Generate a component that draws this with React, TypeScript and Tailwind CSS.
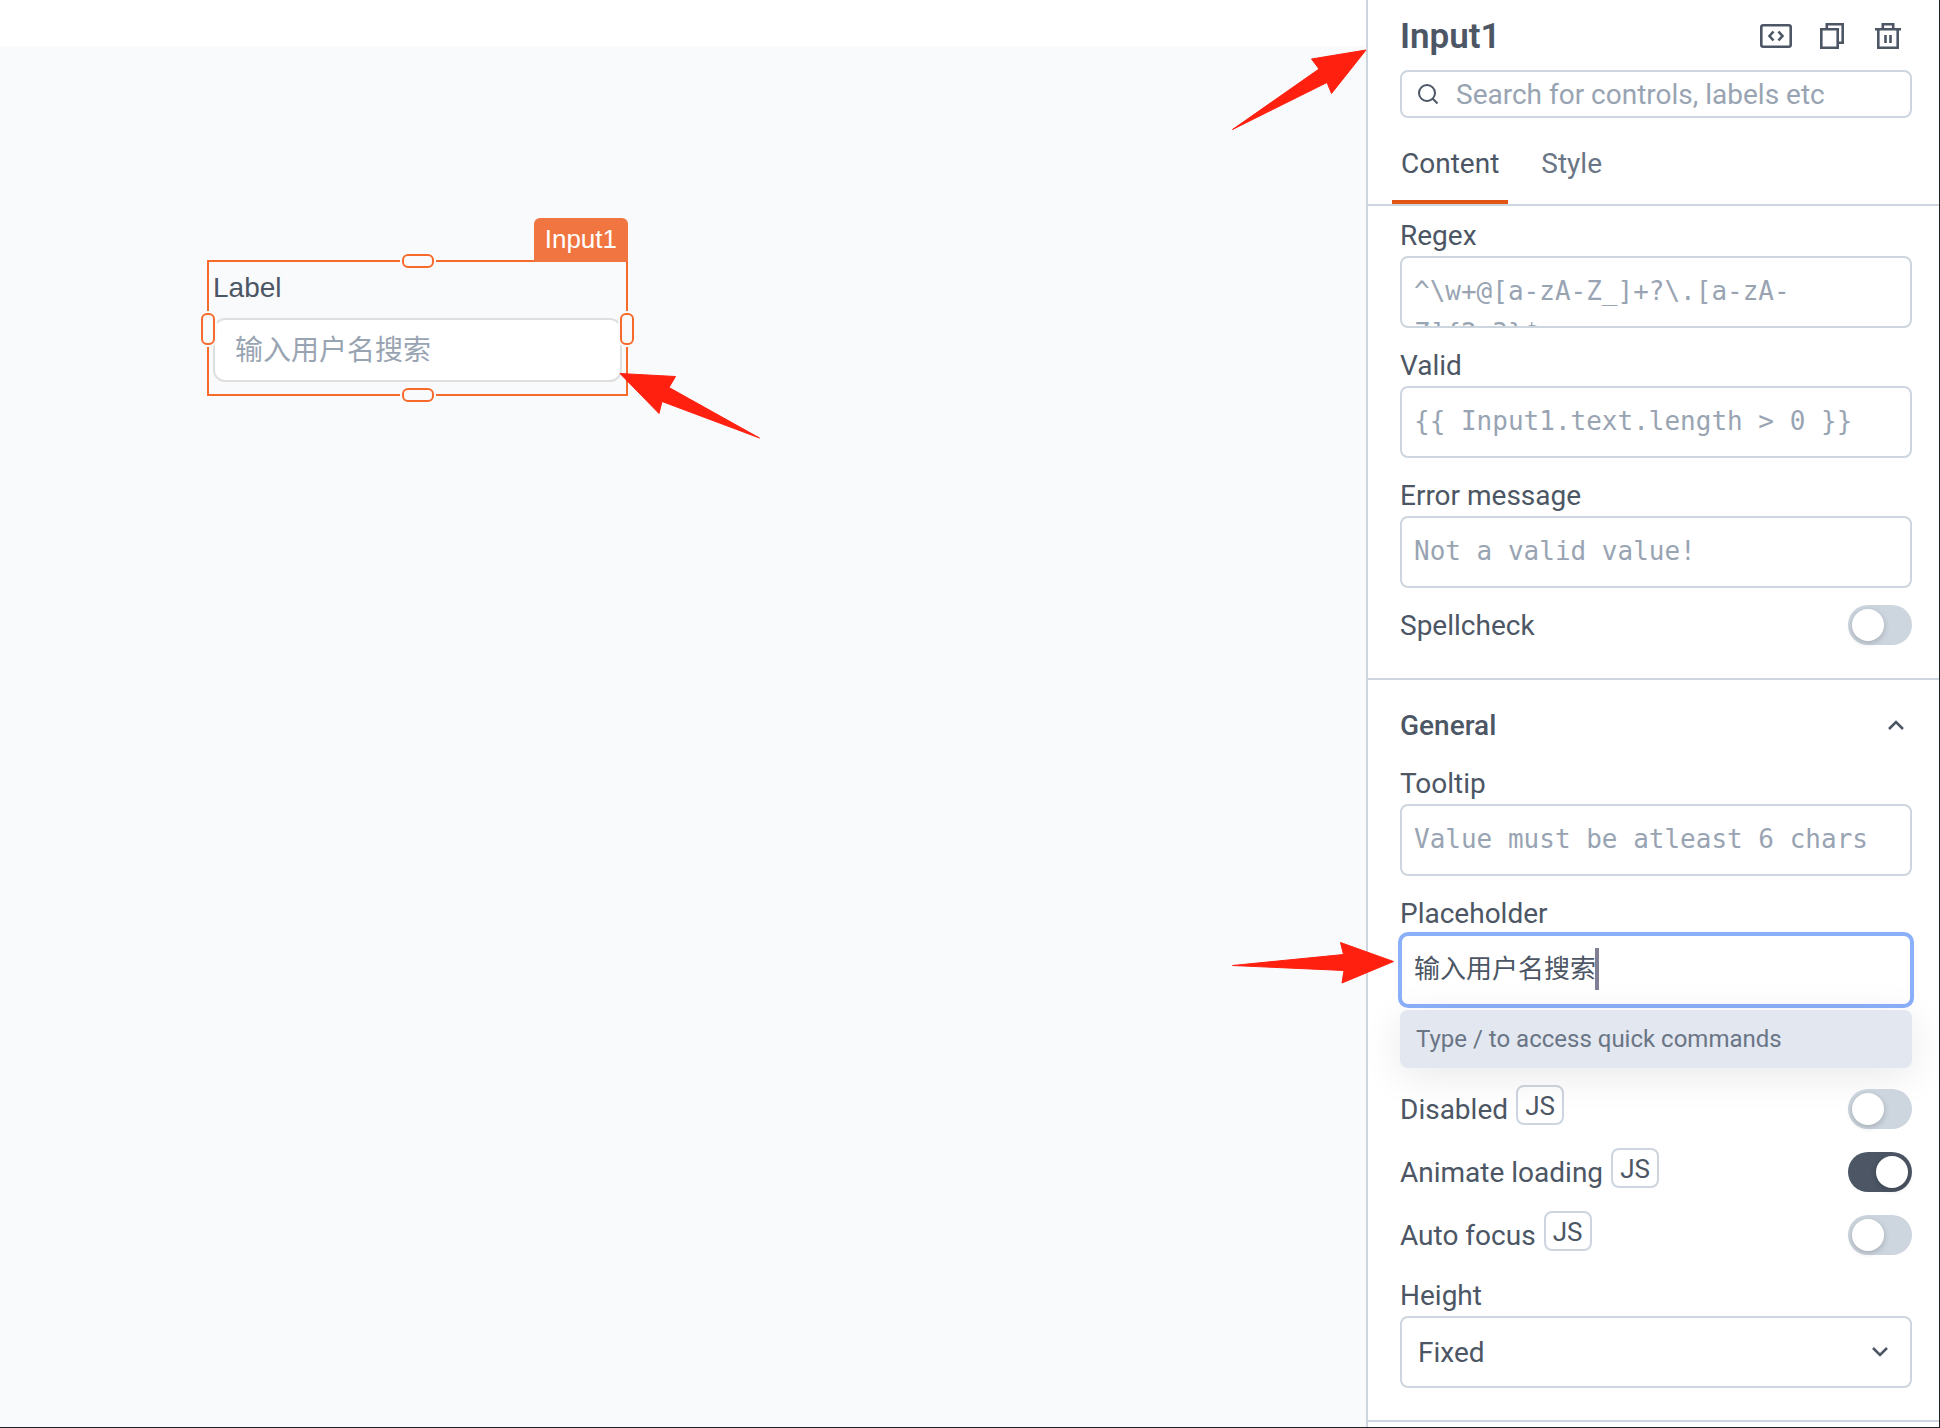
import { useState } from 'react';

const ARROW = '#ff2010';

type FieldProps = {
  id: string;
  label: string;
  placeholder: string;
};

function Field({ id, label, placeholder }: FieldProps) {
  const [value, setValue] = useState('');

  return (
    <div>
      <label htmlFor={id} className="block leading-10">{label}</label>
      <textarea
        id={id}
        value={value}
        onChange={(e) => setValue(e.target.value)}
        placeholder={placeholder}
        className="block h-18 w-full resize-none overflow-hidden rounded-lg border-2 border-[#cdd5df] bg-white px-3 pt-3 font-['DejaVu_Sans_Mono',monospace] text-[26px] leading-[42px] outline-none placeholder:text-[#99a4b3]"
      />
    </div>
  );
}

type ToggleProps = {
  id: string;
  label: string;
  initial?: boolean;
  js?: boolean;
};

function ToggleRow({ id, label, initial = false, js = false }: ToggleProps) {
  const [on, setOn] = useState(initial);

  return (
    <div className="flex h-10 items-center justify-between">
      <div className="flex items-center gap-2">
        <label htmlFor={id} className="pt-0.5 leading-10">{label}</label>
        {js && (
          <button
            type="button"
            aria-label={`${label} JS`}
            className="mb-2 h-10 w-12 rounded-lg border-2 border-[#cdd5df] bg-white pt-px text-center text-[26px] leading-9"
          >
            JS
          </button>
        )}
      </div>
      <span className="relative h-10 w-16">
        <input
          id={id}
          type="checkbox"
          role="switch"
          checked={on}
          onChange={(e) => setOn(e.target.checked)}
          className="peer block h-10 w-16 appearance-none rounded-full bg-[#cdd5df] checked:bg-[#4c5664]"
        />
        <span className="pointer-events-none absolute top-1 left-1 size-8 rounded-full bg-white shadow-[0_2px_6px_rgba(0,0,0,0.2)] peer-checked:left-7" />
      </span>
    </div>
  );
}

function Canvas() {
  const handle = 'absolute rounded-md border-2 border-[#f86a2b] bg-[#f8fafc] ring-2 ring-[#f8fafc]';

  return (
    <main className="flex min-w-0 flex-1 flex-col bg-[#f8fafc]">
      <div className="h-[46px] bg-white" />
      <div className="relative flex-1">
        <div className="absolute top-[214px] left-[207px] h-[136px] w-[421px] border-2 border-[#f86a2b] px-1 pt-[10px] font-['Liberation_Sans','Noto_Sans_CJK_SC',sans-serif]">
          <div className="absolute -right-0.5 bottom-full h-11 rounded-t-md bg-[#f07541] px-[11px] text-[26px] leading-[42px] text-white">
            Input1
          </div>
          <label htmlFor="widget-input" className="block text-[28px] leading-8 text-[#4c5664]">Label</label>
          <input
            id="widget-input"
            type="text"
            placeholder="输入用户名搜索"
            className="mt-[14px] block h-16 w-full rounded-xl border-2 border-[#e0dfdf] bg-white px-5 pt-0.5 text-[28px] outline-none placeholder:text-[#99a4b3]"
          />
          <span className={`${handle} inset-x-0 -top-2 mx-auto h-[14px] w-8`} />
          <span className={`${handle} inset-x-0 -bottom-2 mx-auto h-[14px] w-8`} />
          <span className={`${handle} top-[51px] -left-2 h-8 w-[14px]`} />
          <span className={`${handle} top-[51px] -right-2 h-8 w-[14px]`} />
          <svg className="absolute top-[110px] left-[410px]" width="143" height="68" fill={ARROW} stroke={ARROW} strokeLinejoin="round">
            <path d="M1 1.5 56.5 4.5 50 15.5 140.5 66 43 29.5 40 41.5Z" />
          </svg>
        </div>
      </div>
    </main>
  );
}

function PanelHeader() {
  return (
    <header className="border-b-2 border-[#cdd5df] px-8 pr-[27px]">
      <div className="flex h-[70px] items-center justify-between">
        <h1 className="pt-1 text-[35px] font-semibold">Input1</h1>
        <div className="flex gap-6 pt-0.5 pr-2">
          <button type="button" aria-label="Bind code">
            <svg width="32" height="32" fill="none" stroke="currentColor" strokeWidth="2.6">
              <rect x="1.3" y="5.3" width="29.4" height="21.4" rx="2" />
              <path d="M13.5 11.5 9.5 16l4 4.5M18.5 11.5l4 4.5-4 4.5" />
            </svg>
          </button>
          <button type="button" aria-label="Copy widget">
            <svg width="32" height="32" fill="none" stroke="currentColor" strokeWidth="2.6">
              <path d="M5.3 9.3h16.4v18.4H5.3zM10.8 9V4.3h15.9v18.4H22" />
            </svg>
          </button>
          <button type="button" aria-label="Delete widget">
            <svg width="32" height="32" fill="none" stroke="currentColor" strokeWidth="2.6">
              <path d="M3 9.3h26M10.8 9V4.3h10.4V9M6.3 9.3v18.4h19.4V9.3M13.5 15v8M18.5 15v8" />
            </svg>
          </button>
        </div>
      </div>
      <div className="flex h-12 items-center rounded-lg border-2 border-[#cdd5df] pl-4">
        <svg width="20" height="20" fill="none" stroke="currentColor" strokeWidth="2" aria-hidden="true">
          <circle cx="9" cy="9" r="8" />
          <path d="m14.5 14.5 5 5" />
        </svg>
        <input
          type="search"
          aria-label="Search"
          placeholder="Search for controls, labels etc"
          className="ml-[18px] min-w-0 flex-1 pt-0.5 outline-none placeholder:text-[#99a4b3]"
        />
      </div>
      <div role="tablist" className="-ml-2 flex gap-6 pt-3">
        <button type="button" role="tab" aria-selected="true" className="h-[74px] border-b-4 border-[#e15615] px-[9px] pb-0.5">
          Content
        </button>
        <button type="button" role="tab" aria-selected="false" className="h-[74px] border-b-4 border-transparent px-[9px] pb-0.5 text-[#6a7585]">
          Style
        </button>
      </div>
    </header>
  );
}

function PlaceholderField() {
  const [text, setText] = useState('输入用户名搜索');

  return (
    <div>
      <label htmlFor="placeholder" className="block leading-10">Placeholder</label>
      <div className="relative">
        <textarea
          id="placeholder"
          value={text}
          onChange={(e) => setText(e.target.value)}
          className="block h-18 w-full resize-none overflow-hidden rounded-lg border-2 border-[#8bb0fa] bg-white px-3 pt-3 font-['DejaVu_Sans_Mono','Noto_Sans_CJK_SC',monospace] text-[26px] leading-[42px] ring-2 ring-[#8bb0fa] outline-none"
        />
        <span className="absolute top-[14px] left-[195px] h-[42px] w-1 bg-[#7f8093]" />
        <div className="absolute inset-x-0 top-[76px] h-[58px] rounded-lg bg-[#e2e7f0] px-4 text-[24px] leading-[58px] text-[#6a7585] shadow-[0_8px_40px_rgba(0,0,0,0.09)]">
          Type / to access quick commands
        </div>
        <svg className="absolute top-[7px] left-[-169px]" width="165" height="43" fill={ARROW} stroke={ARROW} strokeLinejoin="round">
          <path d="M162.5 20.5 109.5 1.5 112.5 13.5 1.5 24.5 113 29.5 111 42Z" />
        </svg>
      </div>
    </div>
  );
}

export default function App() {
  return (
    <div className="flex min-h-screen border-r border-b border-[#1f2125] bg-white">
      <Canvas />
      <aside className="relative w-[573px] shrink-0 border-l-2 border-[#cdd5df] bg-white font-[Roboto,'Noto_Sans_CJK_SC',sans-serif] text-[28px] text-[#4c5664]">
        <PanelHeader />

        <section className="border-b-2 border-[#cdd5df] pt-[10px] pr-[27px] pb-[33px] pl-8">
          <div className="flex flex-col gap-[18px] pb-[17px]">
            <Field id="regex" label="Regex" placeholder={'^\\w+@[a-zA-Z_]+?\\.[a-zA-\nZ]{2,3}$'} />
            <Field id="valid" label="Valid" placeholder="{{ Input1.text.length > 0 }}" />
            <Field id="error-message" label="Error message" placeholder="Not a valid value!" />
          </div>
          <ToggleRow id="spellcheck" label="Spellcheck" />
        </section>

        <section className="border-b-2 border-[#cdd5df] pt-[25px] pr-[27px] pb-8 pl-8">
          <button type="button" aria-expanded="true" className="flex h-10 w-full items-center justify-between pr-2 font-medium">
            <span className="pt-0.5">General</span>
            <svg width="16" height="10" fill="none" stroke="currentColor" strokeWidth="2.6" aria-hidden="true">
              <path d="m1 9 7-7 7 7" />
            </svg>
          </button>
          <div className="flex flex-col gap-[18px] pt-[19px] pb-[83px]">
            <Field id="tooltip" label="Tooltip" placeholder="Value must be atleast 6 chars" />
            <PlaceholderField />
          </div>
          <div className="flex flex-col gap-[23px]">
            <ToggleRow id="disabled" label="Disabled" js />
            <ToggleRow id="animate-loading" label="Animate loading" initial js />
            <ToggleRow id="auto-focus" label="Auto focus" js />
          </div>
          <label htmlFor="height" className="mt-[21px] block leading-10">Height</label>
          <div className="relative">
            <select id="height" defaultValue="Fixed" className="block h-18 w-full appearance-none rounded-lg border-2 border-[#cdd5df] bg-white px-4 pt-0.5">
              <option>Fixed</option>
              <option>Auto Height</option>
            </select>
            <svg className="pointer-events-none absolute top-[31px] right-6" width="16" height="10" fill="none" stroke="currentColor" strokeWidth="2.6" aria-hidden="true">
              <path d="m1 1 7 7 7-7" />
            </svg>
          </div>
        </section>

        <svg className="absolute top-[49px] left-[-137px]" width="137" height="82" fill={ARROW} stroke={ARROW} strokeLinejoin="round">
          <path d="M135 1 80.5 10 88 20 1.5 80.5 96 33.5 100.5 44.5Z" />
        </svg>
      </aside>
    </div>
  );
}
